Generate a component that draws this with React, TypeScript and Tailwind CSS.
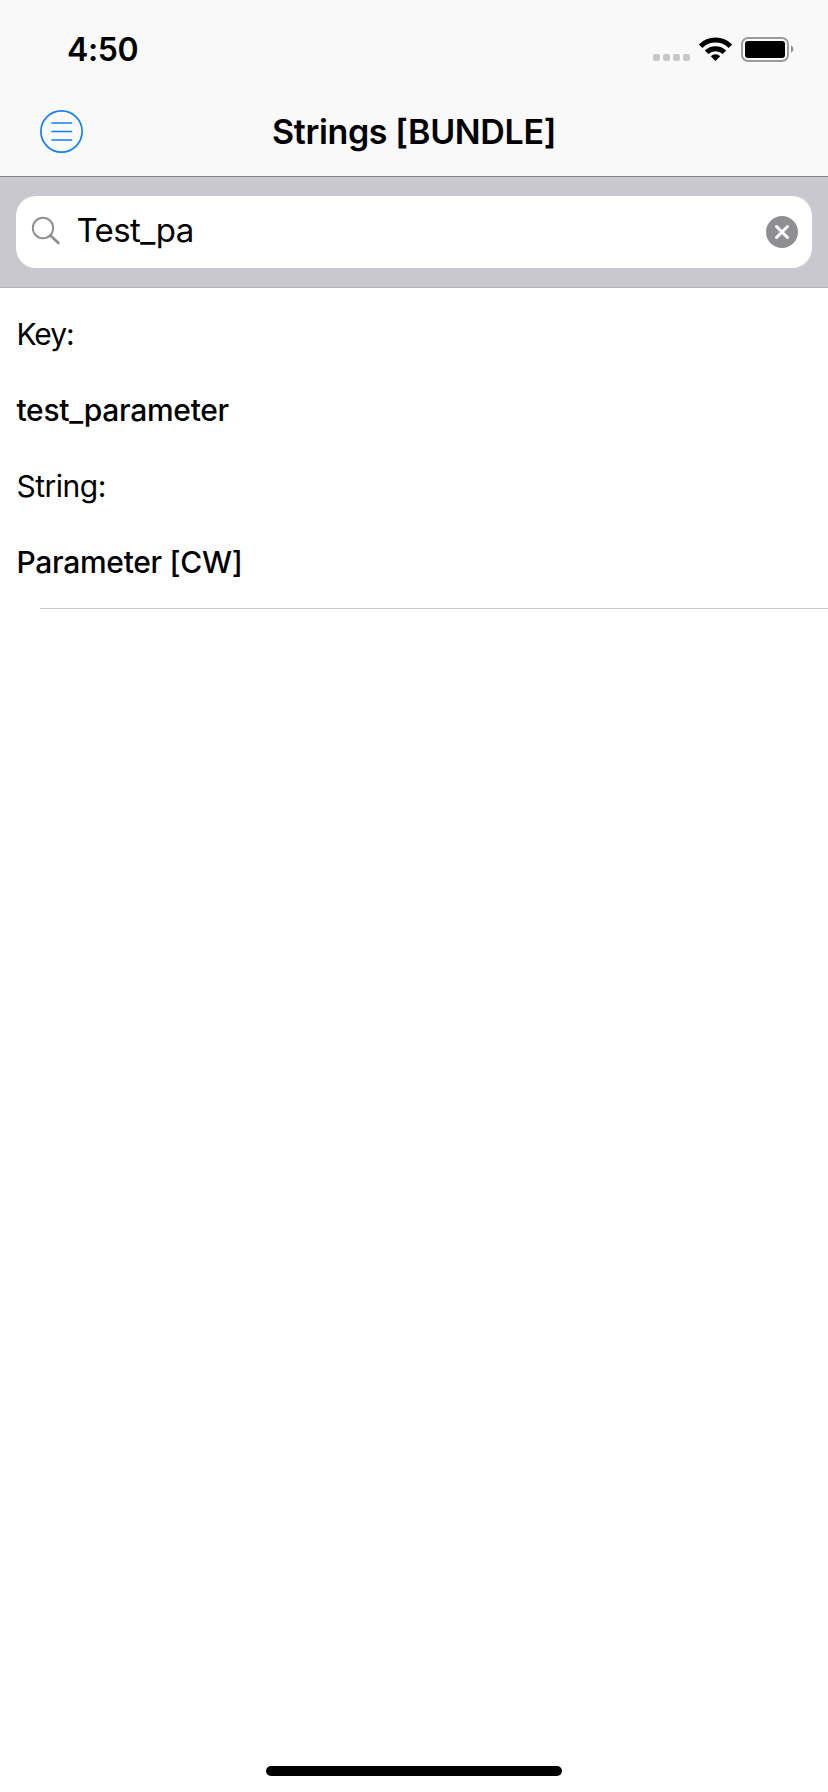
import React from "react";

function StatusBar() {
  return (
    <div className="flex h-[88px] items-center justify-between pt-[10px] pl-[67px] pr-[34px]">
      <time className="mt-[2px] text-[32px] leading-[40px] font-semibold tracking-[-0.4px]">4:50</time>
      <svg className="h-[30px] w-[142px]" viewBox="652 34 142 30" aria-hidden="true">
        <g fill="#c8c8c8">
          <rect x="653" y="54" width="7" height="7" rx="2.2" />
          <rect x="663" y="54" width="7" height="7" rx="2.2" />
          <rect x="673" y="54" width="7" height="7" rx="2.2" />
          <rect x="683" y="54" width="7" height="7" rx="2.2" />
        </g>
        <g fill="none" stroke="#000" strokeWidth="5">
          <path d="M700.6 46.2A21.2 21.2 0 0 1 730.4 46.2" />
          <path d="M706.6 52.3A12.7 12.7 0 0 1 724.4 52.3" />
        </g>
        <path d="M710.8 56.2A6.8 6.8 0 0 1 720.2 56.2L715.5 61Z" />
        <rect x="742" y="38" width="46" height="23" rx="6" fill="none" stroke="#9b9b9b" strokeWidth="2" />
        <rect x="745" y="41" width="40" height="17" rx="3" />
        <path d="M791 45.2A4.4 4.4 0 0 1 791 53Z" fill="#929292" />
      </svg>
    </div>
  );
}

function NavBar() {
  return (
    <nav className="grid h-[88px] grid-cols-[1fr_auto_1fr] items-center px-10">
      <button aria-label="Menu" className="mb-[2px] size-[43px]">
        <svg viewBox="0 0 43 43" fill="none" stroke="#147efb" className="size-full">
          <circle cx="21.5" cy="21.5" r="20.6" strokeWidth="1.7" />
          <path d="M12 13H31.5M12 21.5H31.5M12 30H31.5" strokeWidth="1.7" strokeLinecap="round" />
        </svg>
      </button>
      <h1 className="text-[34px] leading-[42px] font-semibold tracking-[-0.35px]">Strings [BUNDLE]</h1>
    </nav>
  );
}

function SearchBar() {
  return (
    <div className="h-28 border-t border-b border-t-[#818181] border-b-[#b2b1b5] bg-[#c9c8ce] px-4 pt-[19px]">
      <div className="flex h-[72px] items-center rounded-[20px] bg-white pr-[14px] pl-4">
        <svg className="size-7 overflow-visible" viewBox="0 0 28 28" fill="none" stroke="#8e8e93" aria-hidden="true">
          <circle cx="11" cy="10" r="10.2" strokeWidth="1.9" />
          <path d="M18.4 17.5L26.4 25" strokeWidth="2.8" strokeLinecap="round" />
        </svg>
        <span className="flex-1 pb-[3px] pl-[16.5px] text-[33px] leading-[41px] tracking-[-0.6px]">Test_pa</span>
        <button aria-label="Clear" className="size-8">
          <svg viewBox="0 0 32 32" className="size-full">
            <circle cx="16" cy="16" r="16" fill="#8e8e93" />
            <path d="M10.5 10.5L21.5 21.5M21.5 10.5L10.5 21.5" stroke="#fff" strokeWidth="3" strokeLinecap="round" />
          </svg>
        </button>
      </div>
    </div>
  );
}

function Entry() {
  return (
    <dl className="pt-2 text-[30px] leading-[76px]">
      <dt className="pl-[16.5px] tracking-[-1.1px]">Key:</dt>
      <dd className="pl-[16.5px] font-medium tracking-[-0.3px]">test_parameter</dd>
      <dt className="pl-[16.5px] tracking-[-0.5px]">String:</dt>
      <dd className="pl-[16.5px] font-medium tracking-[-0.3px]">Parameter [CW]</dd>
      <div className="mt-2 ml-10 h-px bg-[#c8c7cc]" />
    </dl>
  );
}

export default function App() {
  return (
    <div className="flex h-[1792px] w-[828px] flex-col bg-white font-['Inter','Liberation_Sans',sans-serif] text-black">
      <header className="bg-[#f9f9f9]">
        <StatusBar />
        <NavBar />
      </header>
      <SearchBar />
      <main className="flex-1">
        <Entry />
      </main>
      <div className="mb-4 h-[10px] w-[296px] self-center rounded-full bg-black" />
    </div>
  );
}
